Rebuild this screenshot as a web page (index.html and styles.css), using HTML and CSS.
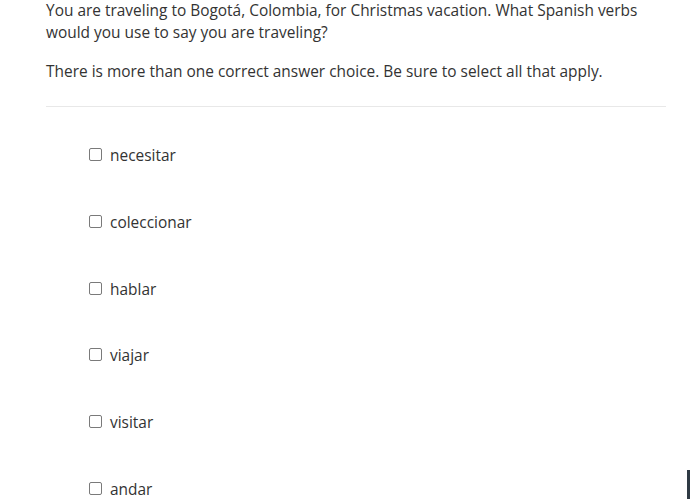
FILE: index.html
```html
<!DOCTYPE html>
<html>
<head>
<meta charset="utf-8">
<link rel="stylesheet" href="styles.css">
</head>
<body>
<div class="question">
  <p class="prompt first">You are traveling to Bogotá, Colombia, for Christmas vacation. What Spanish verbs would you use to say you are traveling?</p>
  <p class="prompt note">There is more than one correct answer choice. Be sure to select all that apply.</p>
  <hr class="sep">
  <ul class="choices">
    <li class="choice"><span class="box"></span><span class="label">necesitar</span></li>
    <li class="choice"><span class="box"></span><span class="label">coleccionar</span></li>
    <li class="choice"><span class="box"></span><span class="label">hablar</span></li>
    <li class="choice"><span class="box"></span><span class="label">viajar</span></li>
    <li class="choice"><span class="box"></span><span class="label">visitar</span></li>
    <li class="choice"><span class="box"></span><span class="label">andar</span></li>
  </ul>
</div>
<div class="edge"></div>
</body>
</html>
```

FILE: styles.css
```css
html, body {
  margin: 0;
  padding: 0;
  background: #fff;
  overflow: hidden;
}
body {
  font-family: "Open Sans", sans-serif;
  font-size: 15.45px;
  color: #333;
  width: 690px;
  height: 499px;
  position: relative;
}
.question {
  padding-left: 46px;
  width: 620px;
}
.prompt {
  margin: 0;
  line-height: 22px;
}
.first {
  margin-top: -1px;
}
.note {
  margin-top: 17px;
}
.sep {
  border: 0;
  border-top: 1px solid #e8e8e8;
  margin: 24px 0 0 0;
  height: 0;
}
.choices {
  list-style: none;
  margin: 0;
  padding: 37px 0 0 43px;
  display: flex;
  flex-direction: column;
  gap: 44.8px;
}
.choice {
  display: flex;
  align-items: center;
  gap: 8px;
  height: 22px;
}
.box {
  width: 11px;
  height: 11px;
  border: 1px solid #7a7a7a;
  border-radius: 2px;
  background: #fff;
  flex: none;
  margin-top: -1px;
}
.label {
  line-height: 22px;
}
.edge {
  position: absolute;
  right: 0;
  top: 470px;
  width: 3px;
  height: 29px;
  background: #2f3a44;
}
```
